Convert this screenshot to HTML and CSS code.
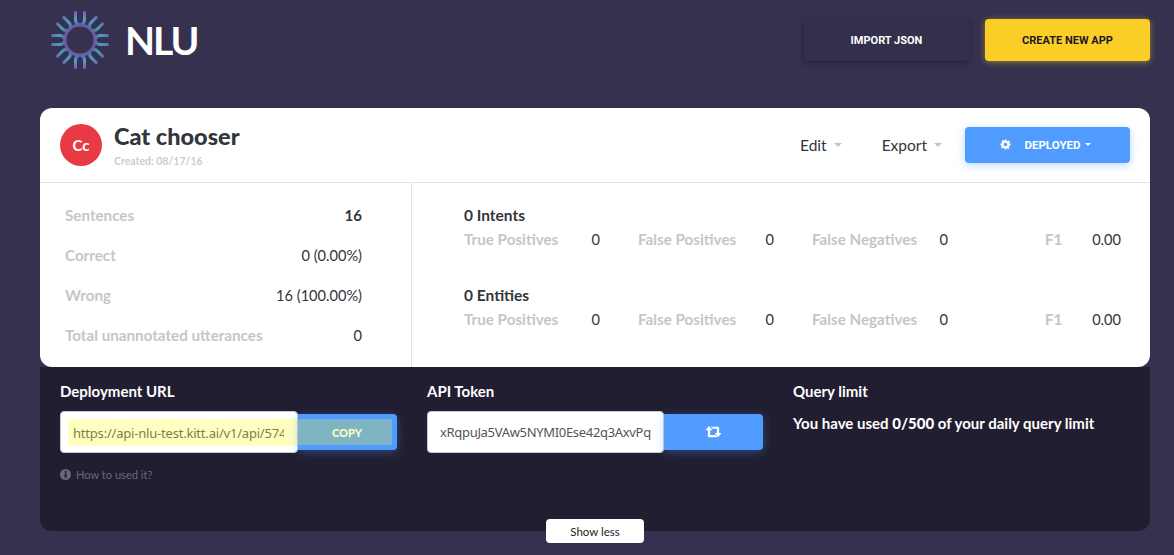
FILE: index.html
```html
<!DOCTYPE html>
<html lang="en">
<head>
    <meta charset="UTF-8">
    <meta name="viewport" content="width=device-width, initial-scale=1.0">
    <title>NLU - Cat chooser</title>
    <link rel="stylesheet" href="styles.css">
</head>
<body>
    <header class="topbar">
        <div class="brand">
            <svg class="brand-mark" viewBox="-30 -30 60 60" width="60" height="60" fill="none" stroke="url(#markGrad)" stroke-width="3" stroke-linecap="round">
                <defs>
                    <radialGradient id="markGrad" gradientUnits="userSpaceOnUse" cx="0" cy="0" r="29">
                        <stop offset="0.5" stop-color="#6658a8"/>
                        <stop offset="0.72" stop-color="#4b9fc0"/>
                        <stop offset="1" stop-color="#6a68b8"/>
                    </radialGradient>
                    <path id="prong" d="M-4.5 -27.500 V-20 Q-4.500 -16.500 -1 -15 M4.500 -27.500 V-20 Q4.500 -16.500 1 -15"/>
                </defs>
                <circle r="15"/>
                <use href="#prong"/>
                <use href="#prong" transform="rotate(45)"/>
                <use href="#prong" transform="rotate(90)"/>
                <use href="#prong" transform="rotate(135)"/>
                <use href="#prong" transform="rotate(180)"/>
                <use href="#prong" transform="rotate(225)"/>
                <use href="#prong" transform="rotate(270)"/>
                <use href="#prong" transform="rotate(315)"/>
            </svg>
            <span class="brand-name">NLU</span>
        </div>
        <div class="topbar-actions">
            <button class="btn btn-dark">IMPORT JSON</button>
            <button class="btn btn-yellow">CREATE NEW APP</button>
        </div>
    </header>

    <main class="app">
        <section class="card">
            <div class="card-head">
                <div class="avatar">Cc</div>
                <div class="app-title">
                    <h1>Cat chooser</h1>
                    <small>Created: 08/17/16</small>
                </div>
                <div class="head-actions">
                    <span class="menu">Edit <i class="caret"></i></span>
                    <span class="menu">Export <i class="caret"></i></span>
                    <button class="btn btn-blue">
                        <svg class="cog" viewBox="0 0 24 24" width="11" height="11"><path fill="#fff" fill-rule="evenodd" d="M10 1h4l.6 3.2 1.9.8 2.7-1.8 2.8 2.8-1.8 2.7.8 1.9L23 10v4l-3.2.6-.8 1.9 1.800 2.700-2.800 2.800-2.700-1.800-1.900.8L14 23h-4l-.6-3.200-1.900-.8-2.700 1.800-2.800-2.800 1.800-2.700-.8-1.900L1 14v-4l3.200-.6.8-1.900-1.800-2.700 2.800-2.800 2.700 1.800 1.900-.8zM12 8a4 4 0 1 0 0 8 4 4 0 0 0 0-8z"/></svg>
                        <span>DEPLOYED</span>
                        <i class="caret caret-white"></i>
                    </button>
                </div>
            </div>
            <div class="card-body">
                <div class="totals">
                    <div class="total-row"><span>Sentences</span><b>16</b></div>
                    <div class="total-row"><span>Correct</span><em>0 (0.00%)</em></div>
                    <div class="total-row"><span>Wrong</span><em>16 (100.00%)</em></div>
                    <div class="total-row"><span>Total unannotated utterances</span><em>0</em></div>
                </div>
                <div class="scores">
                    <div class="score-group">
                        <h3>0 Intents</h3>
                        <div class="score-row">
                            <div class="score"><span>True Positives</span><em>0</em></div>
                            <div class="score"><span>False Positives</span><em>0</em></div>
                            <div class="score"><span>False Negatives</span><em>0</em></div>
                            <div class="score score-f1"><span>F1</span><em>0.00</em></div>
                        </div>
                    </div>
                    <div class="score-group">
                        <h3>0 Entities</h3>
                        <div class="score-row">
                            <div class="score"><span>True Positives</span><em>0</em></div>
                            <div class="score"><span>False Positives</span><em>0</em></div>
                            <div class="score"><span>False Negatives</span><em>0</em></div>
                            <div class="score score-f1"><span>F1</span><em>0.00</em></div>
                        </div>
                    </div>
                </div>
            </div>
        </section>

        <section class="deploy">
            <div class="deploy-col">
                <label>Deployment URL</label>
                <div class="field">
                    <div class="field-box field-box-hl">
                        <input class="hl-input" type="text" readonly value="https://api-nlu-test.kitt.ai/v1/api/574f2b8e9c3d1a">
                    </div>
                    <button class="field-btn"><span class="hl-btn">COPY</span></button>
                </div>
                <a class="help">
                    <svg viewBox="0 0 24 24" width="11" height="11"><circle cx="12" cy="12" r="12" fill="#6a6780"/><rect x="10" y="10" width="4.5" height="9" fill="#211e31"/><rect x="10" y="4.5" width="4.5" height="3.5" fill="#211e31"/></svg>
                    How to used it?
                </a>
            </div>
            <div class="deploy-col">
                <label>API Token</label>
                <div class="field">
                    <div class="field-box">
                        <input class="token-input" type="text" readonly value="xRqpuJa5VAw5NYMI0Ese42q3AxvPq">
                    </div>
                    <button class="field-btn field-btn-icon">
                        <svg viewBox="0 0 24 18" width="17" height="12"><path fill="#fff" d="M5 0l5.500 6.500H7v7h8.500L18 17H5.500c-1 0-2-1-2-2V6.500H0zM8 1h10.500c1 0 2 1 2 2v7.500H24L19 17l-5.500-6.500H17V4h-6.500z"/></svg>
                    </button>
                </div>
            </div>
            <div class="deploy-col">
                <label>Query limit</label>
                <p class="quota">You have used <b>0/500</b> of your daily query limit</p>
            </div>
        </section>
        <button class="show-less">Show less</button>
    </main>
</body>
</html>
```

FILE: styles.css
```css
body {
    font-family: Lato, "Noto Sans", sans-serif;
    margin: 0;
    padding: 0;
    background-color: #35314e;
    color: #32353c;
}
button {
    font-family: inherit;
    cursor: pointer;
    border: none;
}
.topbar {
    display: flex;
    justify-content: space-between;
    height: 108px;
    padding: 0 24px 0 50px;
    box-sizing: border-box;
}
.brand {
    display: flex;
    align-items: center;
    gap: 15px;
    height: 80px;
}
.brand-name {
    color: white;
    font-size: 39px;
    font-weight: 700;
    letter-spacing: -2px;
}
.topbar-actions {
    display: flex;
    gap: 16px;
    padding-top: 19px;
}
.btn {
    height: 42px;
    width: 165px;
    padding: 1px 0 0;
    border-radius: 4px;
    font-family: Roboto, sans-serif;
    font-size: 11px;
    font-weight: 700;
}
.btn-dark {
    background-color: #33304b;
    color: white;
    box-shadow: 0 2px 6px rgba(0, 0, 0, 0.3);
}
.btn-yellow {
    background-color: #fbcd27;
    color: #1c1a22;
    box-shadow: 0 1px 6px rgba(251, 205, 39, 0.5);
}
.btn-blue {
    height: 36px;
    padding: 0 4px 0 0;
    margin-left: -17px;
    background-color: #4f9bff;
    color: white;
    font-size: 11.5px;
    display: flex;
    align-items: center;
    justify-content: center;
    box-shadow: 0 2px 8px rgba(79, 155, 255, 0.4);
}
.btn-blue span {
    margin: 0 3px 0 14px;
}
.app {
    display: flex;
    flex-direction: column;
    padding: 0 24px 0 40px;
}
.card {
    background-color: white;
    border-radius: 12px;
}
.card-head {
    display: flex;
    align-items: center;
    height: 75px;
    padding: 0 20px;
    border-bottom: 1px solid #e4e4e4;
    box-sizing: border-box;
}
.avatar {
    width: 42px;
    height: 42px;
    border-radius: 50%;
    background-color: #e83a44;
    color: white;
    font-size: 15px;
    font-weight: 700;
    display: flex;
    align-items: center;
    justify-content: center;
    margin-right: 12px;
}
.app-title h1 {
    margin: 0;
    font-size: 23.5px;
    line-height: 28px;
    font-weight: 900;
}
.app-title small {
    display: block;
    margin-top: 4px;
    font-size: 10.5px;
    line-height: 14px;
    font-weight: 700;
    color: #cccccc;
}
.head-actions {
    margin-left: auto;
    display: flex;
    align-items: center;
    gap: 40px;
    font-size: 15.5px;
    padding-bottom: 1px;
}
.menu {
    display: flex;
    align-items: center;
    gap: 5px;
}
.caret {
    display: inline-block;
    width: 0;
    height: 0;
    border-left: 4px solid transparent;
    border-right: 4px solid transparent;
    border-top: 4px solid #c4c4c4;
    margin-left: 2px;
}
.caret-white {
    border-left-width: 3px;
    border-right-width: 3px;
    border-top: 3px solid white;
}
.card-body {
    display: flex;
    height: 184px;
}
.totals {
    width: 372px;
    box-sizing: border-box;
    padding: 12px 49px 0 25px;
    border-right: 1px solid #e4e4e4;
}
.total-row {
    display: flex;
    justify-content: space-between;
    align-items: center;
    height: 40px;
    font-size: 15.2px;
}
.total-row span, .score span {
    color: #c6c6c6;
    font-weight: 700;
}
.total-row em, .score em {
    font-style: normal;
    font-size: 14.6px;
}
.total-row b {
    font-size: 15px;
}
.scores {
    flex: 1;
    padding: 22px 29px 0 52px;
}
.score-group {
    height: 80px;
}
.score-group h3 {
    margin: 0;
    font-size: 15.5px;
    line-height: 20px;
    font-weight: 700;
}
.score-row {
    display: flex;
    gap: 38px;
    margin-top: 4px;
}
.score {
    width: 136px;
    display: flex;
    justify-content: space-between;
    align-items: baseline;
    font-size: 15.2px;
    line-height: 20px;
}
.score-f1 {
    width: 76px;
    margin-left: auto;
}
.deploy {
    background-color: #211e31;
    border-radius: 0 0 12px 12px;
    height: 164px;
    box-sizing: border-box;
    padding: 13px 20px 0;
    display: grid;
    grid-template-columns: 337px 336px 1fr;
    gap: 30px;
    color: white;
}
.deploy-col label {
    display: block;
    font-size: 15px;
    line-height: 22px;
    font-weight: 700;
}
.field {
    display: flex;
    align-items: center;
    margin-top: 9px;
}
.field-box {
    width: 237px;
    height: 42px;
    flex: none;
    box-sizing: border-box;
    background-color: white;
    border: 1px solid #ccc;
    border-radius: 4px;
    display: flex;
    align-items: center;
}
.field-box-hl {
    width: 238px;
    padding: 7px 0 6px 7px;
}
.field-box input {
    border: none;
    outline: none;
    width: 100%;
    height: 100%;
    box-sizing: border-box;
    font-family: "Noto Sans", sans-serif;
    font-size: 13px;
}
.hl-input {
    background-color: #ffffc0;
    color: #7d7f4c;
    padding: 0 13px 0 5px;
    letter-spacing: -0.2px;
}
.token-input {
    background-color: transparent;
    color: #555;
    padding: 0 6px 0 12px;
    border-radius: 4px;
    letter-spacing: -0.32px;
}
.field-btn {
    flex: 1;
    height: 36px;
    padding: 5px 5px 5px 0;
    background-color: #4f9bff;
    border-radius: 0 4px 4px 0;
    box-shadow: 0 2px 10px rgba(79, 155, 255, 0.35);
    color: white;
    display: flex;
    align-items: center;
    justify-content: center;
}
.field-btn-icon {
    padding: 0;
}
.hl-btn {
    flex: 1;
    align-self: stretch;
    display: flex;
    align-items: center;
    justify-content: center;
    padding-left: 4px;
    background-color: #7fb4c3;
    color: #ffffc0;
    font-size: 11px;
    font-weight: 900;
}
.help {
    display: flex;
    align-items: center;
    gap: 5px;
    margin-top: 15px;
    font-size: 11.1px;
    color: #6a6780;
}
.quota {
    margin: 9px 0 0;
    font-size: 15px;
    line-height: 24px;
    font-weight: 700;
}
.quota b {
    font-weight: 900;
}
.show-less {
    align-self: center;
    width: 98px;
    height: 24px;
    margin-top: -12px;
    background-color: white;
    border-radius: 4px;
    color: #222;
    font-size: 11.5px;
}
```
